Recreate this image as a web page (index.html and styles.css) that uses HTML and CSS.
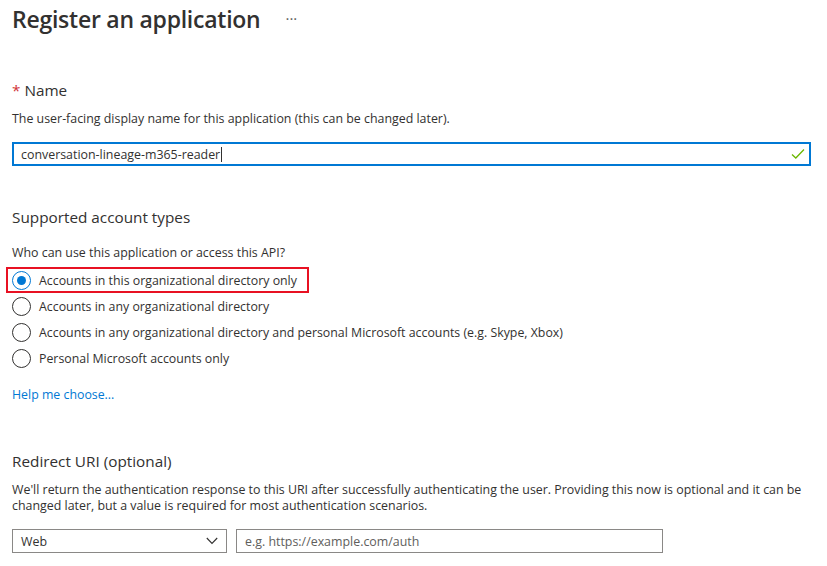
FILE: index.html
```html
<!DOCTYPE html>
<html>
<head>
<meta charset="utf-8">
<link rel="stylesheet" href="styles.css">
</head>
<body>
<div class="page">
  <div class="title-row">
    <h1 class="title">Register an application</h1>
    <span class="more">···</span>
  </div>

  <div class="label-lg name-label"><span class="req">*</span> Name</div>
  <div class="desc desc-name">The user-facing display name for this application (this can be changed later).</div>
  <div class="name-input">
    <span class="value">conversation-lineage-m365-reader</span><span class="caret"></span>
    <svg class="check" width="14" height="12" viewBox="0 0 14 12"><path d="M1 6.5 L4.8 10 L13 1.5" fill="none" stroke="#6bb700" stroke-width="1.3"/></svg>
  </div>

  <div class="label-lg section-label">Supported account types</div>
  <div class="desc who">Who can use this application or access this API?</div>
  <div class="radios">
    <div class="radio-row selected-box">
      <span class="radio on"><span class="dot"></span></span>
      <span class="radio-text">Accounts in this organizational directory only</span>
    </div>
    <div class="radio-row">
      <span class="radio"></span>
      <span class="radio-text">Accounts in any organizational directory</span>
    </div>
    <div class="radio-row">
      <span class="radio"></span>
      <span class="radio-text">Accounts in any organizational directory and personal Microsoft accounts (e.g. Skype, Xbox)</span>
    </div>
    <div class="radio-row">
      <span class="radio"></span>
      <span class="radio-text">Personal Microsoft accounts only</span>
    </div>
  </div>
  <a class="help" href="#">Help me choose...</a>

  <div class="label-lg redirect-label">Redirect URI (optional)</div>
  <p class="desc para">We'll return the authentication response to this URI after successfully authenticating the user. Providing this now is optional and it can be changed later, but a value is required for most authentication scenarios.</p>
  <div class="uri-row">
    <div class="select">
      <span>Web</span>
      <svg width="12" height="8" viewBox="0 0 12 8"><path d="M0.8 1 L6 6.5 L11.2 1" fill="none" stroke="#323130" stroke-width="1.1"/></svg>
    </div>
    <div class="uri-input">e.g. https://example.com/auth</div>
  </div>
</div>
</body>
</html>
```

FILE: styles.css
```css
html, body {
  margin: 0;
  padding: 0;
  background: #ffffff;
}
body {
  font-family: "Open Sans", "Noto Sans", sans-serif;
  color: #323130;
}
.page {
  padding: 0 16px 0 12px;
}
.title-row {
  display: flex;
  align-items: center;
  height: 38px;
}
.title {
  margin: 0;
  font-size: 23px;
  font-weight: 600;
  letter-spacing: -0.25px;
  line-height: 38px;
}
.more {
  margin-left: 25px;
  font-size: 15px;
  color: #605e5c;
  letter-spacing: 0;
  margin-top: -2px;
}
.label-lg {
  font-size: 15.3px;
  line-height: 20px;
}
.name-label {
  margin-top: 42px;
}
.req {
  color: #d13438;
}
.desc {
  font-size: 12.4px;
  line-height: 16px;
}
.desc-name {
  margin-top: 11px;
}
.name-input {
  margin-top: 15px;
  width: 799px;
  height: 24px;
  box-sizing: border-box;
  border: 2px solid #0078d4;
  display: flex;
  align-items: center;
  padding: 0 0 0 7px;
  font-size: 12.4px;
}
.caret {
  display: inline-block;
  width: 1px;
  height: 15px;
  background: #323130;
  margin-left: 1px;
}
.check {
  margin-left: auto;
  margin-right: 4px;
}
.section-label {
  margin-top: 41px;
}
.who {
  margin-top: 18px;
}
.radios {
  margin-top: 6px;
  margin-left: -6px;
}
.radio-row {
  display: flex;
  align-items: center;
  height: 26px;
  padding-left: 6px;
  box-sizing: border-box;
  font-size: 12.35px;
}
.selected-box {
  width: 303px;
  border: 2px solid #e81123;
  padding-left: 4px;
}
.radio {
  width: 17px;
  height: 17px;
  border: 1px solid #323130;
  border-radius: 50%;
  display: flex;
  align-items: center;
  justify-content: center;
  margin-right: 8px;
  flex: none;
  box-sizing: content-box;
}
.radio.on {
  border-color: #0078d4;
}
.dot {
  width: 9px;
  height: 9px;
  border-radius: 50%;
  background: #0078d4;
}
.help {
  display: block;
  margin-top: 16px;
  font-size: 12.35px;
  line-height: 16px;
  color: #0078d4;
  text-decoration: none;
}
.redirect-label {
  margin-top: 48px;
}
.para {
  margin: 11px 0 0 0;
}
.uri-row {
  margin-top: 15px;
  display: flex;
  gap: 9px;
}
.select {
  width: 197px;
  height: 22px;
  border: 1px solid #8a8886;
  display: flex;
  align-items: center;
  justify-content: space-between;
  padding: 0 8px;
  box-sizing: content-box;
  font-size: 12.4px;
}
.uri-input {
  width: 409px;
  height: 22px;
  border: 1px solid #8a8886;
  padding: 0 8px;
  display: flex;
  align-items: center;
  font-size: 12.4px;
  color: #605e5c;
}
```
